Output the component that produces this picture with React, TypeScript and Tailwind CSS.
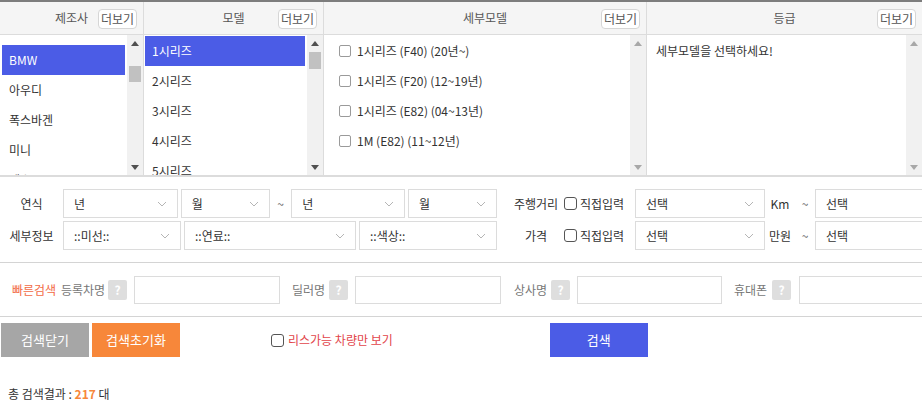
import React from "react";

const makers = ["BMW", "아우디", "폭스바겐", "미니", "벤츠"];
const models = ["1시리즈", "2시리즈", "3시리즈", "4시리즈", "5시리즈"];
const details = [
  "1시리즈 (F40) (20년~)",
  "1시리즈 (F20) (12~19년)",
  "1시리즈 (E82) (04~13년)",
  "1M (E82) (11~12년)",
];

function Chevron() {
  return (
    <svg width="10" height="6" viewBox="0 0 10 6" className="shrink-0">
      <path d="M1 1l4 4 4-4" fill="none" stroke="#b5b5b5" strokeWidth="1" />
    </svg>
  );
}

function Select({ label, w }: { label: string; w: string }) {
  return (
    <div
      className={`flex h-[29px] ${w} shrink-0 items-center justify-between border border-[#dcdcdc] bg-white pl-[10px] pr-[10px] text-[12px] text-[#333]`}
    >
      <span>{label}</span>
      <Chevron />
    </div>
  );
}

function ScrollBar({ thumbTop, thumbH, active }: { thumbTop?: string; thumbH?: string; active: boolean }) {
  const arrow = active ? "#505050" : "#a8a8a8";
  return (
    <div className="flex w-[16px] shrink-0 flex-col bg-[#f1f1f1]">
      <div className="flex h-[16px] items-center justify-center">
        <svg width="8" height="5" viewBox="0 0 8 5">
          <path d="M0 5L4 0l4 5z" fill={arrow} />
        </svg>
      </div>
      <div className="flex-1 px-[2px]">
        {thumbTop && <div className={`${thumbTop} ${thumbH} w-full bg-[#c1c1c1]`} />}
      </div>
      <div className="flex h-[16px] items-center justify-center">
        <svg width="8" height="5" viewBox="0 0 8 5">
          <path d="M0 0h8L4 5z" fill={arrow} />
        </svg>
      </div>
    </div>
  );
}

function Header({ title }: { title: string }) {
  return (
    <div className="relative flex h-[33px] items-center justify-center border-b border-[#dcdcdc] bg-[#f5f5f5] text-[12px] text-[#555]">
      <span>{title}</span>
      <span className="absolute right-[6px] top-[7px] flex h-[20px] w-[39px] items-center justify-center rounded-[4px] border border-[#d6d6d6] bg-white text-[12px] text-[#555]">
        더보기
      </span>
    </div>
  );
}

function Help() {
  return (
    <span className="flex h-[20px] w-[19px] shrink-0 items-center justify-center rounded-[2px] bg-[#dedede] text-[12px] font-bold text-white">
      ?
    </span>
  );
}

function Box({ className = "" }: { className?: string }) {
  return <span className={`inline-block h-[13px] w-[13px] shrink-0 rounded-[3px] border border-[#555] bg-white ${className}`} />;
}

export default function App() {
  return (
    <div
      className="w-[922px] overflow-hidden bg-white text-[#333]"
      style={{ fontFamily: "'Noto Sans CJK KR', 'Noto Sans', sans-serif" }}
    >
      {/* top lists */}
      <div className="flex border-t-2 border-b-2 border-[#7d7d7d] border-b-[#dcdcdc]">
        <div className="w-[144px] shrink-0 border-r border-[#dcdcdc]">
          <Header title="제조사" />
          <div className="flex h-[140px]">
            <div className="flex-1 overflow-hidden pl-[2px] pr-[2px] pt-[10px] text-[12px]">
              {makers.map((m, i) => (
                <div
                  key={m}
                  className={`flex h-[30px] items-center pl-[7px] ${i === 0 ? "bg-[#4b5ce6] text-white" : ""}`}
                >
                  {m}
                </div>
              ))}
            </div>
            <ScrollBar active thumbTop="mt-[15px]" thumbH="h-[16px]" />
          </div>
        </div>
        <div className="w-[180px] shrink-0 border-r border-[#dcdcdc]">
          <Header title="모델" />
          <div className="flex h-[140px]">
            <div className="flex-1 overflow-hidden pl-[1px] pr-[2px] pt-[1px] text-[12px]">
              {models.map((m, i) => (
                <div
                  key={m}
                  className={`flex h-[30px] items-center pl-[7px] ${i === 0 ? "bg-[#4b5ce6] text-white" : ""}`}
                >
                  {m}
                </div>
              ))}
            </div>
            <ScrollBar active thumbTop="mt-[1px]" thumbH="h-[17px]" />
          </div>
        </div>
        <div className="w-[323px] shrink-0 border-r border-[#dcdcdc]">
          <Header title="세부모델" />
          <div className="flex h-[140px]">
            <div className="flex-1 overflow-hidden pl-[15px] pt-[1px] text-[12px]">
              {details.map((d) => (
                <div key={d} className="flex h-[30px] items-center gap-[6px]">
                  <span className="inline-block h-[12px] w-[12px] rounded-[2px] border border-[#9a9a9a] bg-white" />
                  <span>{d}</span>
                </div>
              ))}
            </div>
            <ScrollBar active={false} />
          </div>
        </div>
        <div className="flex-1">
          <Header title="등급" />
          <div className="flex h-[140px]">
            <div className="flex-1 pl-[9px] pt-[1px] text-[12px]">
              <div className="flex h-[30px] items-center">세부모델을 선택하세요!</div>
            </div>
            <ScrollBar active={false} />
          </div>
        </div>
      </div>

      {/* year / mileage / price */}
      <div className="flex border-b border-[#d4d4d4] pt-[12px] pb-[12px] text-[12px]">
        <div className="flex w-[497px] shrink-0 flex-col gap-[3px]">
          <div className="flex items-center">
            <span className="w-[63px] shrink-0 text-center">연식</span>
            <Select label="년" w="w-[115px]" />
            <span className="w-[3px]" />
            <Select label="월" w="w-[89px]" />
            <span className="w-[23px] text-center text-[#666]">~</span>
            <Select label="년" w="w-[114px]" />
            <span className="w-[3px]" />
            <Select label="월" w="w-[89px]" />
          </div>
          <div className="flex items-center">
            <span className="w-[63px] shrink-0 text-center">세부정보</span>
            <Select label="::미선::" w="w-[118px]" />
            <span className="w-[3px]" />
            <Select label="::연료::" w="w-[172px]" />
            <span className="w-[3px]" />
            <Select label="::색상::" w="w-[138px]" />
          </div>
        </div>
        <div className="ml-[12px] flex flex-col gap-[3px]">
          <div className="flex items-center">
            <span className="w-[54px] shrink-0 text-center">주행거리</span>
            <Box className="ml-[1px]" />
            <span className="ml-[3px] w-[55px]">직접입력</span>
            <Select label="선택" w="w-[130px]" />
            <span className="w-[30px] text-center">Km</span>
            <span className="w-[20px] text-center text-[#666]">~</span>
            <div className="flex h-[29px] w-[130px] items-center border border-[#dcdcdc] pl-[10px]">선택</div>
          </div>
          <div className="flex items-center">
            <span className="w-[54px] shrink-0 text-center">가격</span>
            <Box className="ml-[1px]" />
            <span className="ml-[3px] w-[55px]">직접입력</span>
            <Select label="선택" w="w-[130px]" />
            <span className="w-[30px] text-center">만원</span>
            <span className="w-[20px] text-center text-[#666]">~</span>
            <div className="flex h-[29px] w-[130px] items-center border border-[#dcdcdc] pl-[10px]">선택</div>
          </div>
        </div>
      </div>

      {/* quick search */}
      <div className="flex h-[54px] items-center border-b border-[#d4d4d4] pl-[12px] text-[12px] text-[#777]">
        <span className="w-[49px] shrink-0 text-[#f26a45]">빠른검색</span>
        <span className="w-[47px] shrink-0">등록차명</span>
        <Help />
        <div className="ml-[7px] h-[28px] w-[146px] shrink-0 border border-[#dcdcdc]" />
        <span className="ml-[12px] w-[37px] shrink-0">딜러명</span>
        <Help />
        <div className="ml-[7px] h-[28px] w-[146px] shrink-0 border border-[#dcdcdc]" />
        <span className="ml-[13px] w-[37px] shrink-0">상사명</span>
        <Help />
        <div className="ml-[7px] h-[28px] w-[145px] shrink-0 border border-[#dcdcdc]" />
        <span className="ml-[12px] w-[38px] shrink-0">휴대폰</span>
        <Help />
        <div className="ml-[8px] h-[28px] w-[140px] shrink-0 border border-[#dcdcdc]" />
      </div>

      {/* buttons */}
      <div className="flex items-center pl-[1px] pt-[6px] text-[13px]">
        <div className="flex h-[34px] w-[88px] items-center justify-center bg-[#a6a6a6] text-white">검색닫기</div>
        <div className="ml-[3px] flex h-[34px] w-[88px] items-center justify-center bg-[#f7873a] text-white">검색초기화</div>
        <div className="ml-[91px] flex items-center gap-[4px] text-[12px] text-[#e2454a]">
          <Box />
          <span>리스가능 차량만 보기</span>
        </div>
        <div className="ml-[157px] flex h-[34px] w-[98px] items-center justify-center bg-[#4b5ce6] text-white">검색</div>
      </div>

      <div className="pl-[8px] pt-[28px] pb-[4px] text-[12px] text-[#333]">
        총 검색결과 : <b className="text-[#f7873a]">217</b> 대
      </div>
    </div>
  );
}
